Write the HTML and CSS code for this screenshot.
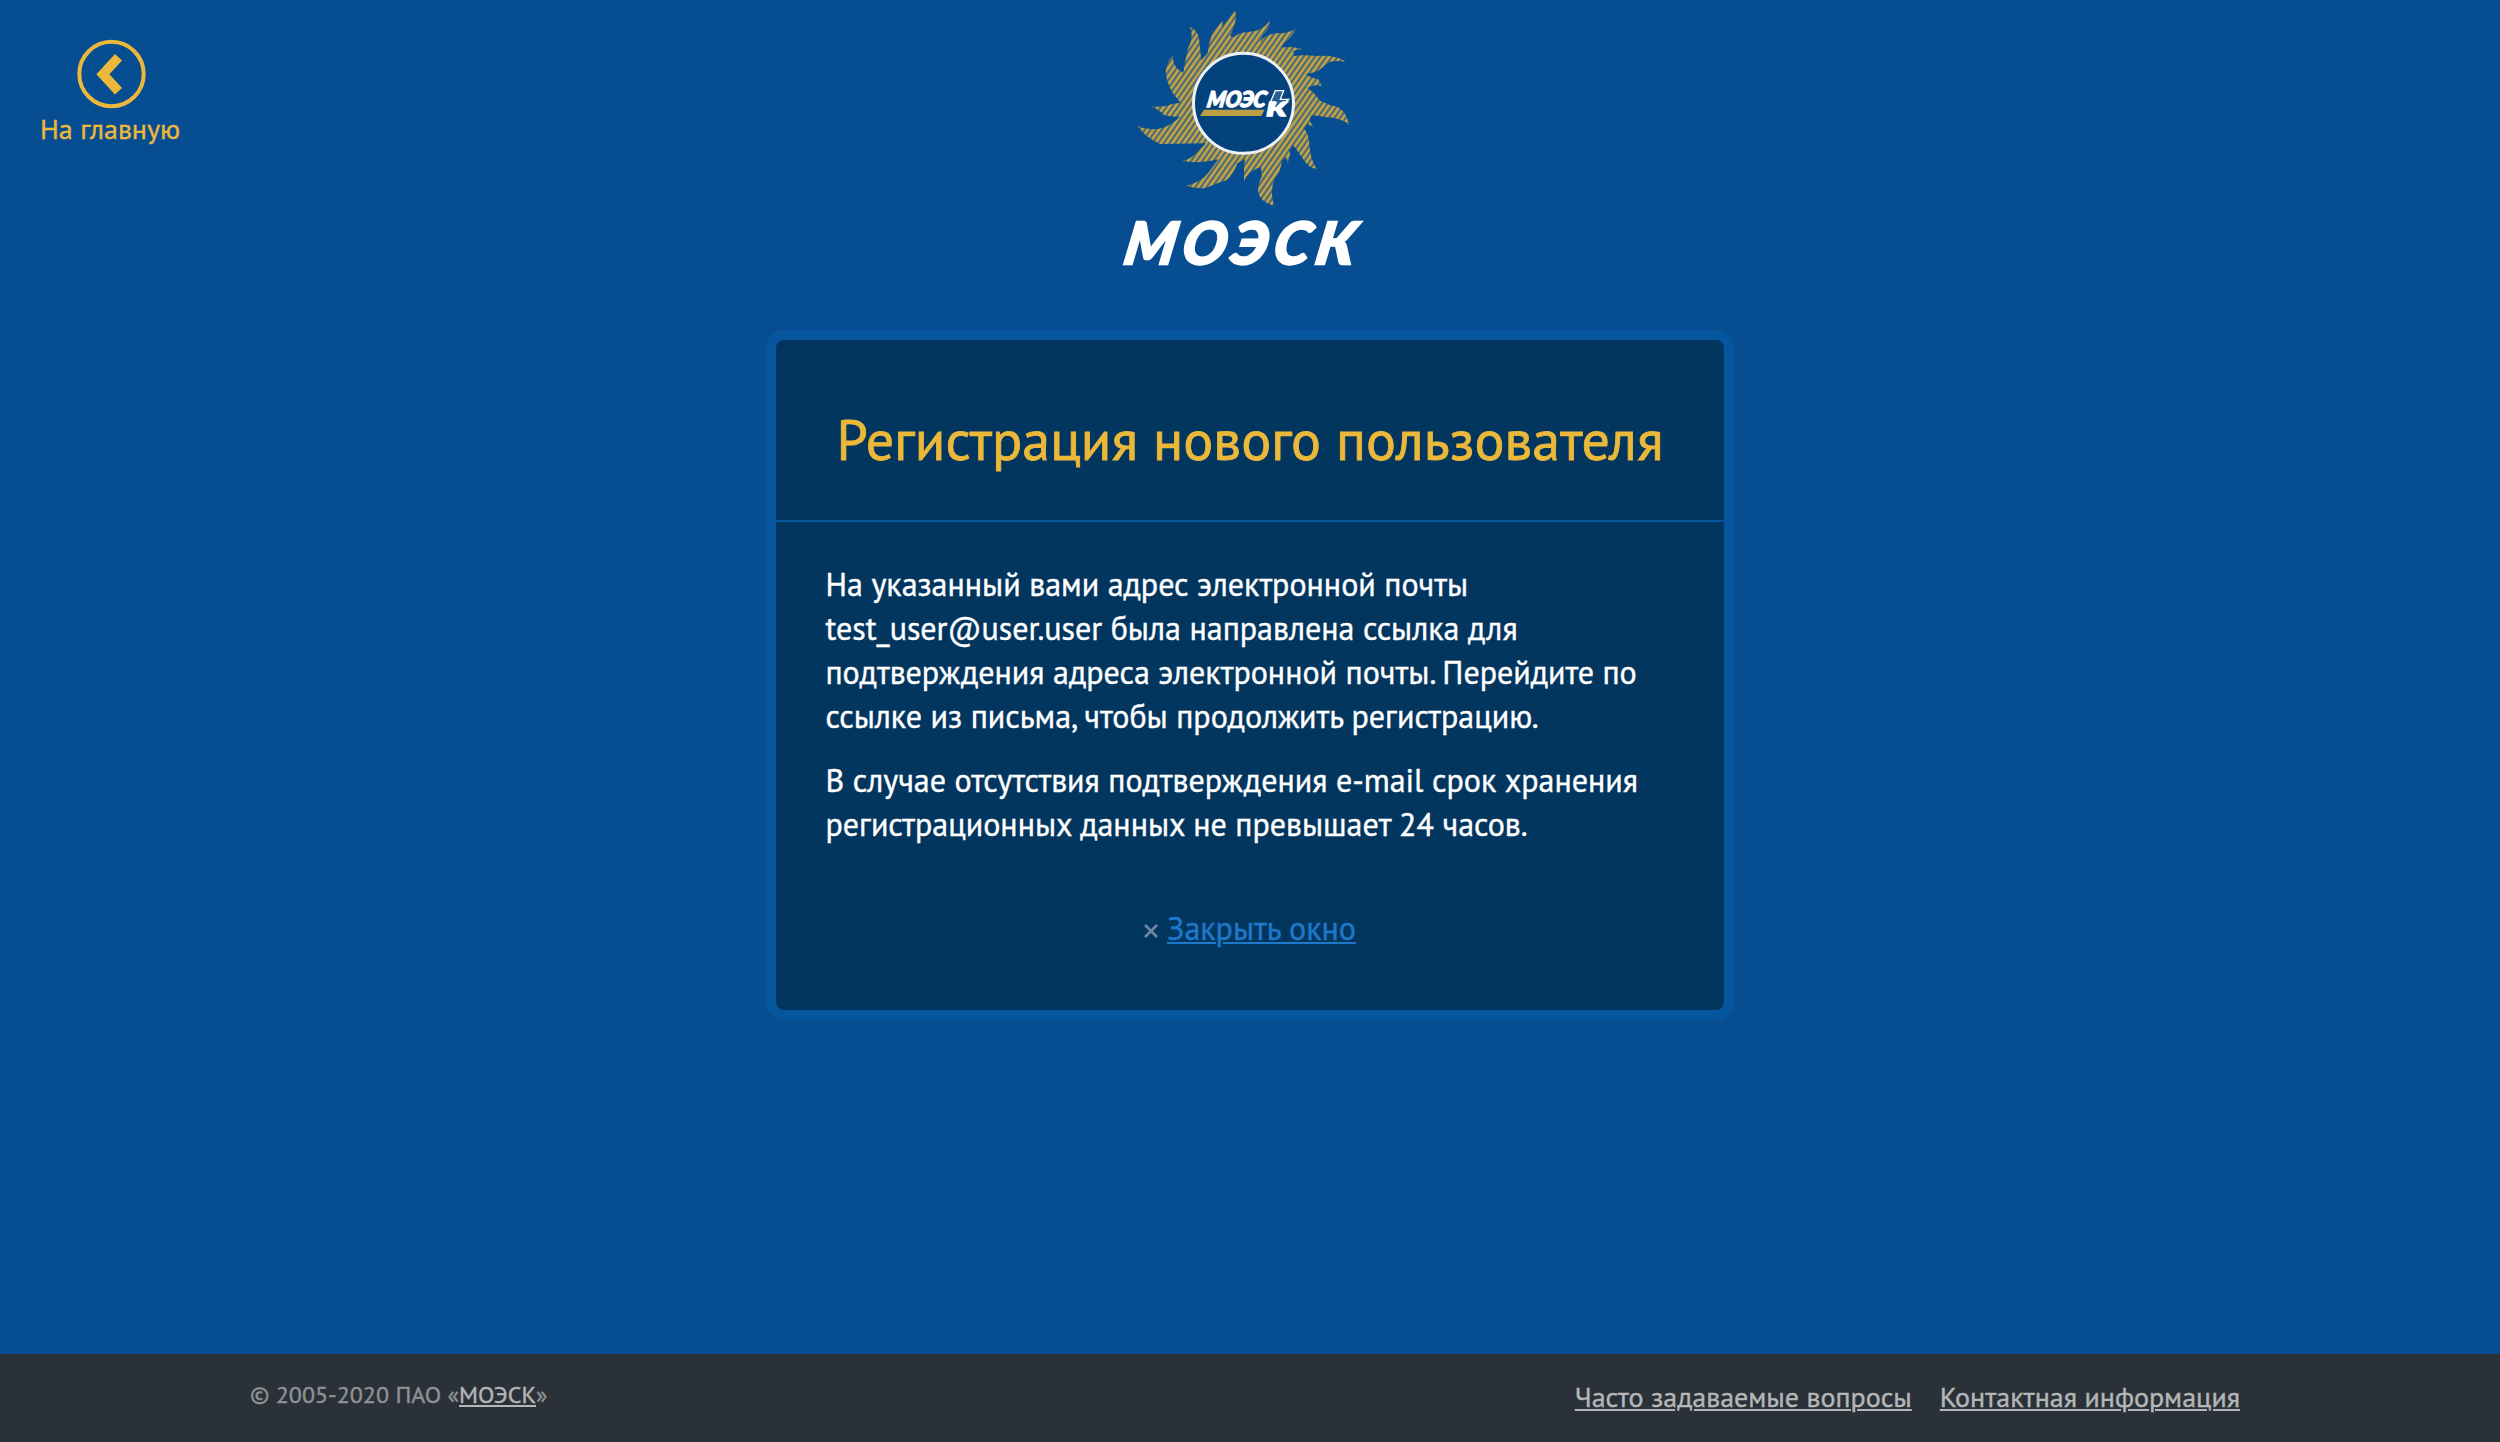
FILE: index.html
```html
<!DOCTYPE html>
<html lang="ru">
<head>
<meta charset="utf-8">
<title>Регистрация нового пользователя</title>
<link rel="stylesheet" href="styles.css">
</head>
<body>
<header class="header">
  <a class="back" href="#">
    <svg class="back-icon" viewBox="0 0 70 70" aria-hidden="true">
      <circle cx="35.500" cy="35" r="32.200" fill="none" stroke="#ebb83a" stroke-width="4"/>
      <path d="M42.500 18.300 L26.900 35.300 L42.500 52.300" fill="none" stroke="#ebb83a" stroke-width="9.600"/>
    </svg>
    <span>На главную</span>
  </a>
  <svg class="logo" viewBox="30 0 840 840" role="img" aria-label="МОЭСК">
    <defs>
      <pattern id="stripes" width="17" height="17" patternUnits="userSpaceOnUse" patternTransform="skewX(-35)">
        <rect width="17" height="17" fill="#40687b"/>
        <rect x="2" width="11" height="17" fill="#8a8860"/>
        <rect x="3.500" width="8" height="17" fill="#c5a443"/>
      </pattern>
    </defs>
    <path fill="url(#stripes)" d="M405 32 Q412 55 400 85 L390 108 L402 112 Q415 97 445 96 Q485 95 510 62 Q508 88 488 105 L480 127 Q495 103 530 100 Q565 100 587 86 Q575 115 552 128 L543 143 Q575 138 605 147 L580 153 L582 168 Q610 164 650 168 Q710 165 737 185 Q695 178 678 192 Q655 220 618 222 Q635 235 655 238 L665 258 Q640 252 622 264 Q640 275 660 302 Q685 315 715 322 Q740 340 748 375 Q720 352 680 352 L635 345 L628 360 L640 382 L622 372 L612 385 Q628 405 628 435 Q632 485 652 508 Q625 505 605 470 L580 436 L568 450 Q574 470 562 490 L558 470 L546 482 Q542 515 525 535 Q508 570 522 617 Q480 605 474 575 Q474 550 485 530 L483 500 Q440 515 432 545 L432 500 L435 478 L412 490 Q400 525 380 540 Q350 550 320 563 Q290 568 260 557 Q305 545 325 518 L355 478 Q300 493 248 482 Q275 475 290 458 L318 430 L180 432 Q135 412 113 378 Q150 395 190 383 Q220 370 240 350 Q205 350 192 345 Q180 330 155 320 Q195 322 215 312 L242 308 Q200 265 197 215 Q200 185 220 165 Q214 200 250 218 Q256 180 264 145 Q282 110 270 80 Q300 95 299 135 L304 180 L323 160 Q326 130 335 105 Q345 85 368 62 L366 80 Z"/>
    <circle cx="430.500" cy="310" r="150" fill="#04427e" stroke="#edf1f7" stroke-width="9"/>
    <path d="M312 329 H494 L484 348 H300 Z" fill="#bd9f43"/>
    <g transform="translate(319 322) skewX(-10)">
      <text class="emblem-text" textLength="176" lengthAdjust="spacingAndGlyphs">МОЭС</text>
    </g>
    <path d="M526 272 H551 L541 298 H566 L532 328 H519 L529 307 H511 Z" fill="#285e93" stroke="#fff" stroke-width="4"/>
    <text class="emblem-bolt" x="499" y="347" textLength="60" lengthAdjust="spacingAndGlyphs">К</text>
    <g transform="translate(67 793) skewX(-10)">
      <text class="wordmark" textLength="689" lengthAdjust="spacing">МОЭСК</text>
    </g>
  </svg>
</header>
<main class="main">
  <section class="card">
    <h1 class="card-title">Регистрация нового пользователя</h1>
    <div class="card-body">
      <p>На указанный вами адрес электронной почты test_user@user.user была направлена ссылка для подтверждения адреса электронной почты. Перейдите по ссылке из письма, чтобы продолжить регистрацию.</p>
      <p>В случае отсутствия подтверждения e-mail срок хранения регистрационных данных не превышает 24 часов.</p>
      <div class="close">
        <svg class="close-icon" viewBox="0 0 14 14" aria-hidden="true"><path d="M1 1 L13 13 M13 1 L1 13" stroke="#70879f" stroke-width="2.600"/></svg>
        <a class="close-link" href="#">Закрыть окно</a>
      </div>
    </div>
  </section>
</main>
<footer class="footer">
  <div class="copyright">© 2005-2020 ПАО «<a href="#">МОЭСК</a>»</div>
  <nav class="footer-links">
    <a href="#">Часто задаваемые вопросы</a>
    <a href="#">Контактная информация</a>
  </nav>
</footer>
</body>
</html>
```
FILE: styles.css
```css
* { box-sizing: border-box; }
body {
  margin: 0;
  min-height: 100vh;
  display: flex;
  flex-direction: column;
  background: #064e91;
  color: #fff;
  font-family: "PT Sans", "Noto Sans", sans-serif;
  font-size: 32px;
  line-height: 44px;
  -webkit-text-stroke: 0.4px currentColor;
}
a {
  text-decoration-thickness: 2px;
  text-underline-offset: 2px;
}
.header {
  height: 330px;
  display: grid;
  grid-template-columns: 1fr auto 1fr;
  align-items: start;
}
.back {
  justify-self: start;
  margin: 39px 0 0 40px;
  display: flex;
  flex-direction: column;
  align-items: center;
  gap: 2px;
  color: #ebb83a;
  font-size: 28px;
  line-height: 36px;
  text-decoration: none;
}
.back-icon { width: 70px; height: 70px; margin-left: 2px; }
.logo { width: 280px; height: 280px; }
.wordmark, .emblem-text, .emblem-bolt {
  font-family: Lato, "Open Sans", sans-serif;
  font-weight: 900;
  font-style: italic;
  fill: #fff;
  stroke: #fff;
  -webkit-text-stroke: 0;
}
.wordmark { font-size: 174px; stroke-width: 7px; }
.emblem-text { font-size: 66px; stroke-width: 4px; }
.emblem-bolt { font-size: 58px; stroke-width: 4px; }
.main {
  flex: 1;
  display: flex;
  justify-content: center;
  align-items: flex-start;
}
.card {
  width: 968px;
  border: 10px solid #06569f;
  border-radius: 18px;
  background: #03365f;
}
.card-title {
  margin: 0;
  padding: 63px 0 45px;
  border-bottom: 2px solid #06569f;
  color: #ebb83a;
  font-size: 56px;
  font-weight: 400;
  line-height: 72px;
  text-align: center;
  -webkit-text-stroke-width: 0.8px;
}
.card-body { padding: 40px 48px 60px; }
.card-body p { margin: 0 0 20px; padding-left: 1.5px; }
.close {
  margin-top: 60px;
  display: flex;
  justify-content: center;
  align-items: center;
  gap: 9px;
}
.close-icon { width: 14px; height: 14px; margin-top: 6px; }
.close-link { color: #1f78c8; }
.footer {
  height: 88px;
  padding: 25px 260px 0 250px;
  display: flex;
  justify-content: space-between;
  align-items: flex-start;
  background: #2b3138;
}
.copyright {
  color: #8f9294;
  font-size: 24px;
  line-height: 32px;
}
.footer a { color: #b4b6b7; }
.footer-links {
  display: flex;
  gap: 28px;
  font-size: 28px;
  line-height: 36px;
}
```
